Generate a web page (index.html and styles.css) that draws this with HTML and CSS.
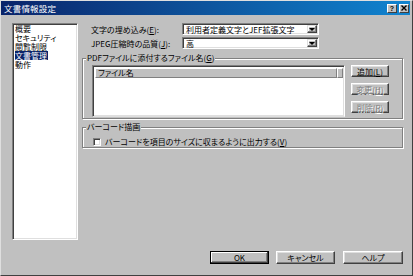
FILE: index.html
```html
<!DOCTYPE html>
<html lang="ja">
<head>
<meta charset="utf-8">
<title>文書情報設定</title>
<link rel="stylesheet" href="styles.css">
</head>
<body>
<div class="window">
  <div class="titlebar">
    <span class="title">文書情報設定</span>
    <div class="tbtns">
      <span class="tbtn q">?</span>
      <span class="tbtn"><svg width="6" height="6" viewBox="0 0 6 6"><path d="M0.5 0.5L5.5 5.5M5.5 0.5L0.5 5.5" stroke="#000" stroke-width="1.4"/></svg></span>
    </div>
  </div>
  <div class="main">
    <div class="navlist">
      <div class="item">概要</div>
      <div class="item">セキュリティ</div>
      <div class="item">閲覧制限</div>
      <div class="item"><span class="sel">文書管理</span></div>
      <div class="item">動作</div>
    </div>
    <div class="pane">
      <div class="row">
        <span class="label">文字の埋め込み(<u>E</u>):</span>
        <div class="combo"><span class="ctext">利用者定義文字とJEF拡張文字</span><span class="cbtn"><i class="tri"></i></span></div>
      </div>
      <div class="row row2">
        <span class="label">JPEG圧縮時の品質(<u>J</u>):</span>
        <div class="combo"><span class="ctext">高</span><span class="cbtn"><i class="tri"></i></span></div>
      </div>
      <div class="group g1">
        <span class="legend">PDFファイルに添付するファイル名(<u>G</u>)</span>
        <div class="listview">
          <div class="lvhead"><span class="col1">ファイル名</span><span class="col2"></span></div>
          <div class="lvbody"></div>
        </div>
        <div class="sidebtns">
          <span class="btn small">追加(<u>L</u>)</span>
          <span class="btn small dis">変更(<u>H</u>)</span>
          <span class="btn small dis">削除(<u>R</u>)</span>
        </div>
      </div>
      <div class="group g2">
        <span class="legend">バーコード描画</span>
        <div class="check"><span class="cbox"></span><span class="clabel">バーコードを項目のサイズに収まるように出力する(<u>V</u>)</span></div>
      </div>
    </div>
  </div>
  <div class="footer">
    <span class="btn big def">OK</span>
    <span class="btn big">キャンセル</span>
    <span class="btn big help">ヘルプ</span>
  </div>
</div>
</body>
</html>
```
FILE: styles.css
```css
* { box-sizing: border-box; }
html, body { margin: 0; padding: 0; }
body {
  width: 413px;
  height: 276px;
  background: #c0c0c0;
  font-family: "Noto Sans CJK JP", "Noto Sans", sans-serif;
  font-size: 8px;
  color: #000;
  font-feature-settings: "palt";
  overflow: hidden;
}
u { text-decoration: underline; text-underline-offset: 1px; }
.window {
  width: 413px;
  height: 276px;
  background: #c0c0c0;
  border-top: 1px solid #dfdfdf;
  border-left: 1px solid #dfdfdf;
  border-right: 1px solid #404040;
  border-bottom: 1px solid #404040;
  display: flex;
  flex-direction: column;
}
.titlebar {
  height: 14px;
  margin-right: 2px;
  background: linear-gradient(to right, #0a246a, #1084d0);
  display: flex;
  align-items: center;
  justify-content: space-between;
  padding: 0 1px 0 3px;
}
.title { color: #fff; font-size: 8.5px; line-height: 14px; letter-spacing: 0.2px; }
.tbtns { display: flex; gap: 2px; }
.tbtn {
  width: 10px;
  height: 9px;
  background: #c0c0c0;
  border-top: 1px solid #fff;
  border-left: 1px solid #fff;
  border-right: 1px solid #404040;
  border-bottom: 1px solid #404040;
  display: flex;
  align-items: center;
  justify-content: center;
  font-family: "Liberation Sans", sans-serif;
  font-weight: bold;
  font-size: 7px;
  line-height: 7px;
}
.main { display: flex; height: 225px; }
.navlist {
  margin: 8px 0 0 11px;
  width: 66px;
  height: 217px;
  background: #fff;
  border-top: 1px solid #808080;
  border-left: 1px solid #808080;
  border-right: 1px solid #fff;
  border-bottom: 1px solid #fff;
  box-shadow: inset 1px 1px #404040, inset -1px -1px #dfdfdf;
  padding: 0 0 0 2px;
}
.item { line-height: 9px; height: 9px; white-space: nowrap; overflow: hidden; }
.sel { background: #0a246a; color: #fff; display: inline-block; padding-right: 1px; height: 9px; }
.pane { margin: 8px 0 0 4px; width: 321px; display: flex; flex-direction: column; }
.row { display: flex; align-items: center; height: 12px; }
.row2 { margin-top: 2px; }
.label { width: 100px; padding-left: 9px; white-space: nowrap; }
.combo {
  width: 137px;
  height: 12px;
  background: #fff;
  border-top: 1px solid #808080;
  border-left: 1px solid #808080;
  border-right: 1px solid #fff;
  border-bottom: 1px solid #fff;
  box-shadow: inset 1px 1px #404040, inset -1px -1px #dfdfdf;
  display: flex;
  align-items: center;
  padding: 1px 1px 1px 3px;
}
.ctext { flex: 1; white-space: nowrap; line-height: 9px; }
.cbtn {
  width: 10px;
  height: 8px;
  background: #c0c0c0;
  border-top: 1px solid #dfdfdf;
  border-left: 1px solid #dfdfdf;
  border-right: 1px solid #404040;
  border-bottom: 1px solid #404040;
  box-shadow: inset -1px -1px #808080, inset 1px 1px #fff;
  display: flex;
  align-items: center;
  justify-content: center;
}
.tri {
  width: 0; height: 0;
  border-left: 3px solid transparent;
  border-right: 3px solid transparent;
  border-top: 3px solid #000;
}
.group {
  position: relative;
  border: 1px solid #808080;
  box-shadow: inset 1px 1px #fff, 1px 1px #fff;
}
.legend {
  position: absolute;
  top: -6px;
  left: 3px;
  background: #c0c0c0;
  padding: 0 1px;
  line-height: 10px;
  white-space: nowrap;
}
.g1 {
  margin-top: 9px;
  height: 61px;
  display: flex;
  padding: 6px 13px 0 9px;
  gap: 6px;
}
.listview {
  width: 253px;
  height: 52px;
  background: #fff;
  border-top: 1px solid #808080;
  border-left: 1px solid #808080;
  border-right: 1px solid #fff;
  border-bottom: 1px solid #dfdfdf;
  box-shadow: inset 1px 1px #404040, inset -1px -1px #dfdfdf;
  padding: 2px 1px 1px 2px;
  display: flex;
  flex-direction: column;
}
.lvhead { display: flex; height: 10px; }
.lvhead span {
  background: #c0c0c0;
  border-top: 1px solid #fff;
  border-left: 1px solid #fff;
  border-right: 1px solid #808080;
  border-bottom: 1px solid #808080;
  line-height: 8px;
  padding-left: 2px;
}
.col1 { flex: 1; }
.col2 { width: 6px; }
.lvbody { flex: 1; }
.sidebtns { display: flex; flex-direction: column; gap: 6px; }
.btn {
  background: #c0c0c0;
  border-top: 1px solid #fff;
  border-left: 1px solid #fff;
  border-right: 1px solid #404040;
  border-bottom: 1px solid #404040;
  box-shadow: inset -1px -1px #808080, inset 1px 1px #dfdfdf;
  display: flex;
  align-items: center;
  justify-content: center;
  white-space: nowrap;
}
.small { width: 38px; height: 12px; line-height: 9px; }
.dis { color: #808080; text-shadow: 1px 1px #fff; }
.g2 {
  margin-top: 8px;
  height: 21px;
  padding: 10px 0 0 10px;
}
.check { display: flex; align-items: center; gap: 4px; height: 8px; }
.cbox {
  width: 8px;
  height: 8px;
  background: #fff;
  border-top: 1px solid #808080;
  border-left: 1px solid #808080;
  border-right: 1px solid #fff;
  border-bottom: 1px solid #fff;
  box-shadow: inset 1px 1px #404040, inset -1px -1px #dfdfdf;
}
.clabel { line-height: 8px; white-space: nowrap; }
.footer {
  margin-top: 11px;
  display: flex;
  justify-content: flex-end;
  gap: 7px;
  padding-right: 9px;
}
.big { width: 59px; height: 13px; line-height: 10px; }
.help { width: 60px; margin-left: 1px; }
.def { border: 1px solid #000; box-shadow: inset -1px -1px #404040, inset 1px 1px #fff, inset -2px -2px #808080; }
```
